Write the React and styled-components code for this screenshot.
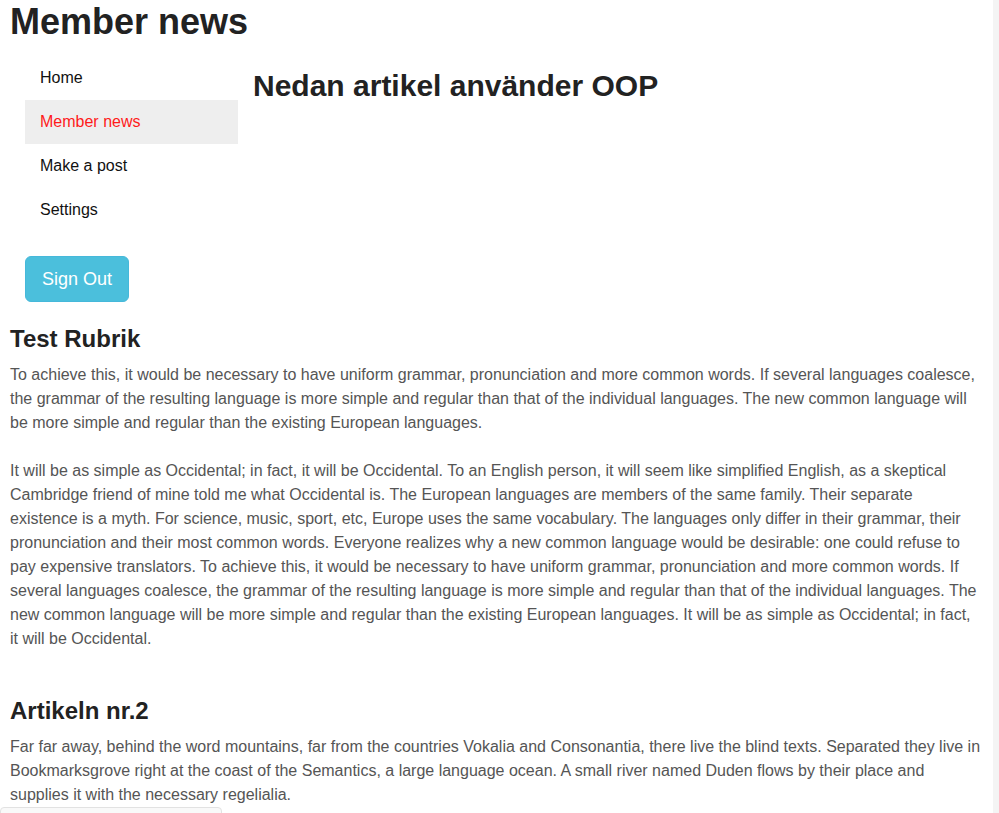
import styled, { createGlobalStyle } from "styled-components"

const GlobalStyle = createGlobalStyle`
html, body {
    margin: 0;
    padding: 0;
    background: #f4f4f4;
}
body {
    font-family: "Liberation Sans", Arial, sans-serif;
    font-size: 16px;
    color: #333;
}
`;

const Page = styled.div`
box-sizing: border-box;
width: 993px;
min-height: 100vh;
padding: 2px 12px 0 10px;
background: #fff;
`;

const Title = styled.h1`
margin: 0;
font-size: 36px;
line-height: 1.1;
font-weight: bold;
color: #222;
`;

const Row = styled.div`
display: flex;
align-items: flex-start;
margin-top: 14px;
`;

const SideColumn = styled.div`
box-sizing: border-box;
width: 243px;
padding: 0 15px;
flex-shrink: 0;
`;

const NavList = styled.ul`
list-style: none;
margin: 0;
padding: 0;
`;

const NavItem = styled.li`
padding: 12px 15px;
line-height: 20px;
font-size: 16px;
background: ${props => props.active ? '#eeeeee' : 'transparent'};
color: ${props => props.active ? '#ff1a1a' : '#111'};
cursor: pointer;
`;

const SignOut = styled.button`
margin-top: 24px;
font-family: inherit;
font-size: 18px;
line-height: 24px;
padding: 10px 16px;
color: #fff;
background: #4bbfdc;
border: 1px solid #46b8da;
border-radius: 6px;
cursor: pointer;
`;

const Main = styled.div`
flex: 1;
`;

const Lead = styled.h2`
margin: 13px 0 0;
font-size: 30px;
line-height: 1.1;
font-weight: bold;
color: #222;
`;

const Article = styled.section`
margin-top: ${props => props.first ? '24px' : '47px'};
`;

const ArticleTitle = styled.h3`
margin: 0 0 11px;
font-size: 24px;
line-height: 1.1;
font-weight: bold;
color: #222;
`;

const Text = styled.p`
margin: 0;
font-size: 16px;
line-height: 24px;
color: #555;
& + & {
    margin-top: 24px;
}
`;

const Footer = styled.div`
box-sizing: border-box;
margin: 0 0 0 -10px;
width: 222px;
height: 30px;
background: #f9f9f9;
border: 1px solid #e2e2e2;
border-radius: 4px;
`;

const navLinks = ["Home", "Member news", "Make a post", "Settings"];

const articles = [
    {
        title: "Test Rubrik",
        paragraphs: [
            "To achieve this, it would be necessary to have uniform grammar, pronunciation and more common words. If several languages coalesce, the grammar of the resulting language is more simple and regular than that of the individual languages. The new common language will be more simple and regular than the existing European languages.",
            "It will be as simple as Occidental; in fact, it will be Occidental. To an English person, it will seem like simplified English, as a skeptical Cambridge friend of mine told me what Occidental is. The European languages are members of the same family. Their separate existence is a myth. For science, music, sport, etc, Europe uses the same vocabulary. The languages only differ in their grammar, their pronunciation and their most common words. Everyone realizes why a new common language would be desirable: one could refuse to pay expensive translators. To achieve this, it would be necessary to have uniform grammar, pronunciation and more common words. If several languages coalesce, the grammar of the resulting language is more simple and regular than that of the individual languages. The new common language will be more simple and regular than the existing European languages. It will be as simple as Occidental; in fact, it will be Occidental.",
        ],
    },
    {
        title: "Artikeln nr.2",
        paragraphs: [
            "Far far away, behind the word mountains, far from the countries Vokalia and Consonantia, there live the blind texts. Separated they live in Bookmarksgrove right at the coast of the Semantics, a large language ocean. A small river named Duden flows by their place and supplies it with the necessary regelialia.",
        ],
    },
];

const App = () => {
    return <>
        <GlobalStyle />
        <Page>
            <Title>Member news</Title>
            <Row>
                <SideColumn>
                    <NavList>
                        {navLinks.map(link => (
                            <NavItem key={link} active={link === "Member news"}>{link}</NavItem>
                        ))}
                    </NavList>
                    <SignOut>Sign Out</SignOut>
                </SideColumn>
                <Main>
                    <Lead>Nedan artikel använder OOP</Lead>
                </Main>
            </Row>
            {articles.map((article, i) => (
                <Article key={article.title} first={i === 0}>
                    <ArticleTitle>{article.title}</ArticleTitle>
                    {article.paragraphs.map((p, j) => <Text key={j}>{p}</Text>)}
                </Article>
            ))}
            <Footer />
        </Page>
    </>
}

export default App
